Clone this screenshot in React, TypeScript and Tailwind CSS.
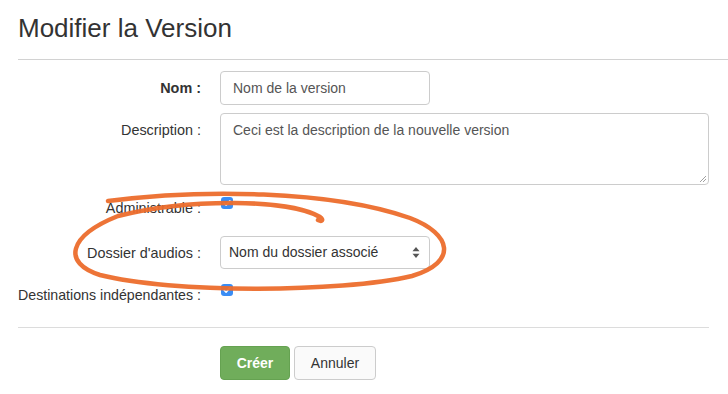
import React from "react";

function Check() {
  return (
    <svg width="12" height="12" viewBox="0 0 12 12" className="block">
      <rect x="0" y="0" width="12" height="12" rx="3" fill="#3a8df5" />
      <path d="M3.2 6.3 L5.1 8.2 L8.9 3.8" stroke="#fff" strokeWidth="1.6" fill="none" strokeLinecap="round" strokeLinejoin="round" />
    </svg>
  );
}

export default function App() {
  return (
    <div
      className="relative w-[728px] h-[394px] bg-white overflow-hidden text-[#333] text-[14px]"
      style={{ fontFamily: '"Liberation Sans", Arial, sans-serif' }}
    >
      <div className="pl-[18px]">
        <h2 className="pt-[13px] text-[26px] leading-[30px] font-normal text-[#333]">Modifier la Version</h2>
        <div className="mt-[16px] h-px bg-[#d2d2d2]" />
      </div>

      <div className="pl-[18px] w-[709px]">
        {/* Nom */}
        <div className="mt-[11px] flex items-center">
          <div className="w-[183px] text-right font-bold leading-[20px] text-[14.4px]">Nom :</div>
          <div className="ml-[19px] w-[210px] h-[34px] border border-[#ccc] rounded-[4px] flex items-center px-[12px] text-[#555]">
            Nom de la version
          </div>
        </div>

        {/* Description */}
        <div className="mt-[8px] flex">
          <div className="w-[183px] text-right leading-[20px] pt-[7px] text-[14.4px]">Description :</div>
          <div className="relative ml-[19px] flex-1 h-[72px] border border-[#ccc] rounded-[4px] px-[12px] pt-[6px] leading-[20px] text-[#555]">
            Ceci est la description de la nouvelle version
            <svg width="8" height="8" viewBox="0 0 8 8" className="absolute right-[1px] bottom-[1px]">
              <path d="M7 1 L1 7 M7 4 L4 7" stroke="#888" strokeWidth="0.8" />
            </svg>
          </div>
        </div>

        {/* Administrable */}
        <div className="mt-[12px] flex">
          <div className="w-[183px] text-right leading-[20px] pt-[1px] text-[14.4px]">Administrable :</div>
          <div className="ml-[20px]">
            <Check />
          </div>
        </div>

        {/* Dossier */}
        <div className="mt-[18px] flex items-center">
          <div className="w-[183px] text-right leading-[20px] text-[14.4px]">Dossier d'audios :</div>
          <div className="ml-[19px] w-[210px] h-[33px] border border-[#ccc] rounded-[4px] flex items-center justify-between pl-[8px] pr-[9px] text-[#333]">
            <span>Nom du dossier associé</span>
            <svg width="8" height="13" viewBox="0 0 8 13">
              <path d="M4 1 L7.5 5.3 L0.5 5.3 Z" fill="#555" />
              <path d="M4 12 L7.5 7.7 L0.5 7.7 Z" fill="#555" />
            </svg>
          </div>
        </div>

        {/* Destinations */}
        <div className="mt-[15px] flex">
          <div className="w-[183px] text-right leading-[20px] pt-[1px] whitespace-nowrap text-[14.2px]">Destinations indépendantes :</div>
          <div className="ml-[20px]">
            <Check />
          </div>
        </div>

        <div className="mt-[22px] h-px bg-[#dcdcdc]" />

        <div className="mt-[18px] flex pl-[202px] gap-[4px]">
          <div className="w-[70px] h-[34px] rounded-[4px] bg-[#70ad5b] border border-[#65a251] text-white font-bold flex items-center justify-center">
            Créer
          </div>
          <div className="w-[82px] h-[34px] rounded-[4px] bg-[#fafafa] border border-[#ccc] text-[#333] flex items-center justify-center">
            Annuler
          </div>
        </div>
      </div>

      {/* hand-drawn annotation */}
      <svg className="absolute left-0 top-0 pointer-events-none" width="728" height="394" viewBox="0 0 728 394">
        <path
          d="M108 201 C 200 189, 330 190, 410 218 C 452 234, 458 262, 412 276 C 340 293, 170 293, 100 275 C 62 263, 68 236, 118 216 C 190 198, 290 199, 320 217 C 324 220, 322 222, 318 220"
          fill="none"
          stroke="#ec6d2c"
          strokeWidth="4.5"
          strokeLinecap="round"
          strokeLinejoin="round"
          opacity="0.95"
        />
      </svg>
    </div>
  );
}
